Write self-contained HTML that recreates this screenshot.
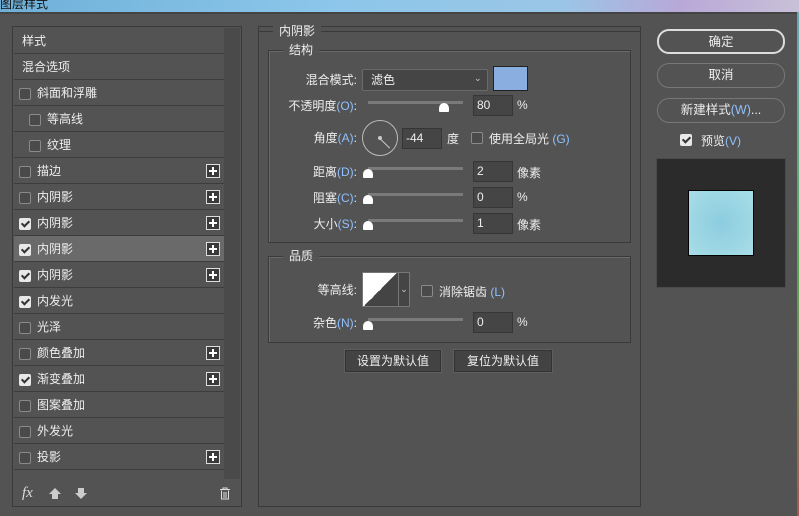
<!DOCTYPE html><html><head><meta charset="utf-8"><style>
*{margin:0;padding:0;box-sizing:border-box}
body{width:799px;height:516px;background:#535353;position:relative;overflow:hidden;font-family:"Liberation Sans","Noto Sans CJK SC",sans-serif;font-size:12px;color:#eee}
.a{position:absolute}
.row{position:absolute;left:14px;width:210px;height:26px;border-bottom:1px solid #3d3d3d;line-height:27px}
.cb{position:absolute;width:12px;height:12px;border:1px solid #8a8a8a;border-radius:2px;background:#4a4a4a}
.row .cb{top:8px!important}
.cb.on{background:#e8e8e8;border-color:#e8e8e8}
.cb.on:after{content:"";position:absolute;left:3px;top:0px;width:3px;height:6px;border:solid #333;border-width:0 2px 2px 0;transform:rotate(45deg)}
.plus{position:absolute;left:192px;top:6px;width:14px;height:14px;border:1px solid #ddd;background:#3a3a3a}
.plus:before{content:"";position:absolute;left:2px;top:5px;width:8px;height:2px;background:#fff}
.plus:after{content:"";position:absolute;left:5px;top:2px;width:2px;height:8px;background:#fff}
.fs{position:absolute;border:1px solid #3a3a3a;box-shadow:1px 1px 0 #6a6a6a inset}
.lg{position:absolute;background:#535353;padding:0 6px;line-height:14px}
.lbl{position:absolute;text-align:right;width:100px;line-height:16px}
.lbl b,.k{color:#8fc1ff;font-weight:normal}
.track{position:absolute;height:3px;background:#7a7a7a}
.thumb{position:absolute;width:10px;height:9px;background:#fff;border-radius:5px 5px 1px 1px}
.inp{position:absolute;width:40px;height:21px;background:#454545;border:1px solid #363636;line-height:19px;padding-left:3px}
.btn{position:absolute;border:1px solid #777;border-radius:12px;text-align:center;line-height:22px;font-size:12.5px}
.sbtn{position:absolute;background:#434343;border:1px solid #333;box-shadow:0 0 0 1px #5f5f5f;text-align:center;line-height:21px}
</style></head><body>
<div class="a" style="left:0;top:0;width:799px;height:12px;background:linear-gradient(90deg,#6fb0d8,#8bc6ea 40%,#9ac6e6 70%,#b8a8d8 85%,#c8c0d8)"></div>
<div class="a" style="left:0;top:-5px;font-size:12px;color:#111">图层样式</div>
<div class="a" style="left:0;top:12px;width:799px;height:2px;background:#444"></div>
<div class="a" style="left:12px;top:26px;width:230px;height:481px;border:1px solid #3a3a3a;background:#535353"></div>
<div class="a" style="left:224px;top:28px;width:16px;height:451px;background:#4a4a4a"></div>
<div class="row" style="top:28px;padding-left:8px">样式</div>
<div class="row" style="top:54px;padding-left:8px">混合选项</div>
<div class="row" style="top:80px"><span class="cb" style="left:5px;top:7px"></span><span class="a" style="left:23px">斜面和浮雕</span></div>
<div class="row" style="top:106px"><span class="cb" style="left:15px;top:7px"></span><span class="a" style="left:33px">等高线</span></div>
<div class="row" style="top:132px"><span class="cb" style="left:15px;top:7px"></span><span class="a" style="left:33px">纹理</span></div>
<div class="row" style="top:158px"><span class="cb" style="left:5px;top:7px"></span><span class="a" style="left:23px">描边</span><span class="plus"></span></div>
<div class="row" style="top:184px"><span class="cb" style="left:5px;top:7px"></span><span class="a" style="left:23px">内阴影</span><span class="plus"></span></div>
<div class="row" style="top:210px"><span class="cb on" style="left:5px;top:7px"></span><span class="a" style="left:23px">内阴影</span><span class="plus"></span></div>
<div class="row" style="top:236px;background:#6a6a6a"><span class="cb on" style="left:5px;top:7px"></span><span class="a" style="left:23px">内阴影</span><span class="plus"></span></div>
<div class="row" style="top:262px"><span class="cb on" style="left:5px;top:7px"></span><span class="a" style="left:23px">内阴影</span><span class="plus"></span></div>
<div class="row" style="top:288px"><span class="cb on" style="left:5px;top:7px"></span><span class="a" style="left:23px">内发光</span></div>
<div class="row" style="top:314px"><span class="cb" style="left:5px;top:7px"></span><span class="a" style="left:23px">光泽</span></div>
<div class="row" style="top:340px"><span class="cb" style="left:5px;top:7px"></span><span class="a" style="left:23px">颜色叠加</span><span class="plus"></span></div>
<div class="row" style="top:366px"><span class="cb on" style="left:5px;top:7px"></span><span class="a" style="left:23px">渐变叠加</span><span class="plus"></span></div>
<div class="row" style="top:392px"><span class="cb" style="left:5px;top:7px"></span><span class="a" style="left:23px">图案叠加</span></div>
<div class="row" style="top:418px"><span class="cb" style="left:5px;top:7px"></span><span class="a" style="left:23px">外发光</span></div>
<div class="row" style="top:444px"><span class="cb" style="left:5px;top:7px"></span><span class="a" style="left:23px">投影</span><span class="plus"></span></div>
<div class="a" style="left:22px;top:485px;font-style:italic;font-family:'Liberation Serif',serif;font-size:15px;color:#ddd">fx</div>
<div class="a" style="left:49px;top:488px;width:0;height:0;border:6px solid transparent;border-bottom-color:#ccc;border-top:0"></div>
<div class="a" style="left:52px;top:494px;width:6px;height:5px;background:#ccc"></div>
<div class="a" style="left:78px;top:488px;width:6px;height:5px;background:#ccc"></div>
<div class="a" style="left:75px;top:493px;width:0;height:0;border:6px solid transparent;border-top-color:#ccc;border-bottom:0"></div>
<svg class="a" style="left:219px;top:487px" width="12" height="13"><path d="M1 2.5h10M4 2.5V1h4v1.5M2.5 3.5v8.5h7V3.5M5 5v6M7 5v6" stroke="#ddd" fill="none"/></svg>
<div class="a" style="left:258px;top:26px;width:383px;height:481px;border:1px solid #3a3a3a"></div>
<div class="a" style="left:258px;top:31px;width:382px;height:1px;background:#3a3a3a"></div>
<div class="lg" style="left:273px;top:24px">内阴影</div>
<div class="fs" style="left:268px;top:50px;width:363px;height:193px"></div>
<div class="lg" style="left:283px;top:43px">结构</div>
<div class="lbl" style="left:257px;top:72px">混合模式:</div>
<div class="a" style="left:362px;top:69px;width:126px;height:22px;background:#454545;border:1px solid #6a6a6a;border-radius:2px;line-height:20px;padding-left:8px">滤色<span class="a" style="left:111px;top:-2px;font-size:9px;color:#ccc">&#8964;</span></div>
<div class="a" style="left:493px;top:66px;width:35px;height:25px;background:#8aaee0;border:1px solid #222;box-shadow:0 0 0 1px #8aaee0 inset"></div>
<div class="lbl" style="left:257px;top:98px">不透明度<b>(O)</b>:</div>
<div class="track" style="left:368px;top:101px;width:95px"></div>
<div class="thumb" style="left:439px;top:103px"></div>
<div class="inp" style="left:473px;top:95px">80</div><div class="a" style="left:517px;top:98px">%</div>
<div class="lbl" style="left:257px;top:130px">角度<b>(A)</b>:</div>
<div class="a" style="left:362px;top:120px;width:36px;height:36px;border:1px solid #bbb;border-radius:50%"></div>
<div class="a" style="left:378px;top:136px;width:4px;height:4px;background:#ccc;border-radius:50%"></div>
<div class="a" style="left:380px;top:138px;width:14px;height:1px;background:#ccc;transform:rotate(44deg);transform-origin:0 0"></div>
<div class="inp" style="left:402px;top:128px">-44</div><div class="a" style="left:447px;top:130px">度</div>
<span class="cb" style="left:471px;top:132px"></span><div class="a" style="left:489px;top:130px">使用全局光 <span class="k">(G)</span></div>
<div class="lbl" style="left:257px;top:164px">距离<b>(D)</b>:</div>
<div class="track" style="left:368px;top:167px;width:95px"></div><div class="thumb" style="left:363px;top:169px"></div>
<div class="inp" style="left:473px;top:161px">2</div><div class="a" style="left:517px;top:164px">像素</div>
<div class="lbl" style="left:257px;top:190px">阻塞<b>(C)</b>:</div>
<div class="track" style="left:368px;top:193px;width:95px"></div><div class="thumb" style="left:363px;top:195px"></div>
<div class="inp" style="left:473px;top:187px">0</div><div class="a" style="left:517px;top:190px">%</div>
<div class="lbl" style="left:257px;top:216px">大小<b>(S)</b>:</div>
<div class="track" style="left:368px;top:219px;width:95px"></div><div class="thumb" style="left:363px;top:221px"></div>
<div class="inp" style="left:473px;top:213px">1</div><div class="a" style="left:517px;top:216px">像素</div>
<div class="fs" style="left:268px;top:256px;width:363px;height:87px"></div>
<div class="lg" style="left:283px;top:249px">品质</div>
<div class="lbl" style="left:257px;top:282px">等高线:</div>
<div class="a" style="left:362px;top:272px;width:37px;height:35px;border:1px solid #777;background:linear-gradient(135deg,#fff 50%,#444 50%)"></div>
<div class="a" style="left:398px;top:272px;width:12px;height:35px;border:1px solid #777;background:#454545;font-size:9px;color:#ccc;text-align:center;line-height:33px">&#8964;</div>
<span class="cb" style="left:421px;top:285px"></span><div class="a" style="left:439px;top:283px">消除锯齿 <span class="k">(L)</span></div>
<div class="lbl" style="left:257px;top:315px">杂色<b>(N)</b>:</div>
<div class="track" style="left:368px;top:318px;width:95px"></div><div class="thumb" style="left:363px;top:321px"></div>
<div class="inp" style="left:473px;top:312px">0</div><div class="a" style="left:517px;top:315px">%</div>
<div class="sbtn" style="left:345px;top:350px;width:96px;height:22px">设置为默认值</div>
<div class="sbtn" style="left:454px;top:350px;width:98px;height:22px">复位为默认值</div>
<div class="btn" style="left:657px;top:29px;width:128px;height:25px;border:2px solid #ddd">确定</div>
<div class="btn" style="left:657px;top:63px;width:128px;height:25px">取消</div>
<div class="btn" style="left:657px;top:98px;width:128px;height:25px">新建样式<span class="k">(W)</span>...</div>
<span class="cb on" style="left:680px;top:134px"></span><div class="a" style="left:701px;top:132px">预览<span class="k">(V)</span></div>
<div class="a" style="left:656px;top:158px;width:130px;height:130px;background:#2b2b2b;border:1px solid #4a4a4a"></div>
<div class="a" style="left:688px;top:190px;width:66px;height:66px;border:1px solid #000;background:radial-gradient(circle at 50% 50%,#8ccde0,#a8dde6)"></div>
<div class="a" style="left:797px;top:12px;width:2px;height:504px;background:linear-gradient(#6ab,#5a5,#a55)"></div>
</body></html>
